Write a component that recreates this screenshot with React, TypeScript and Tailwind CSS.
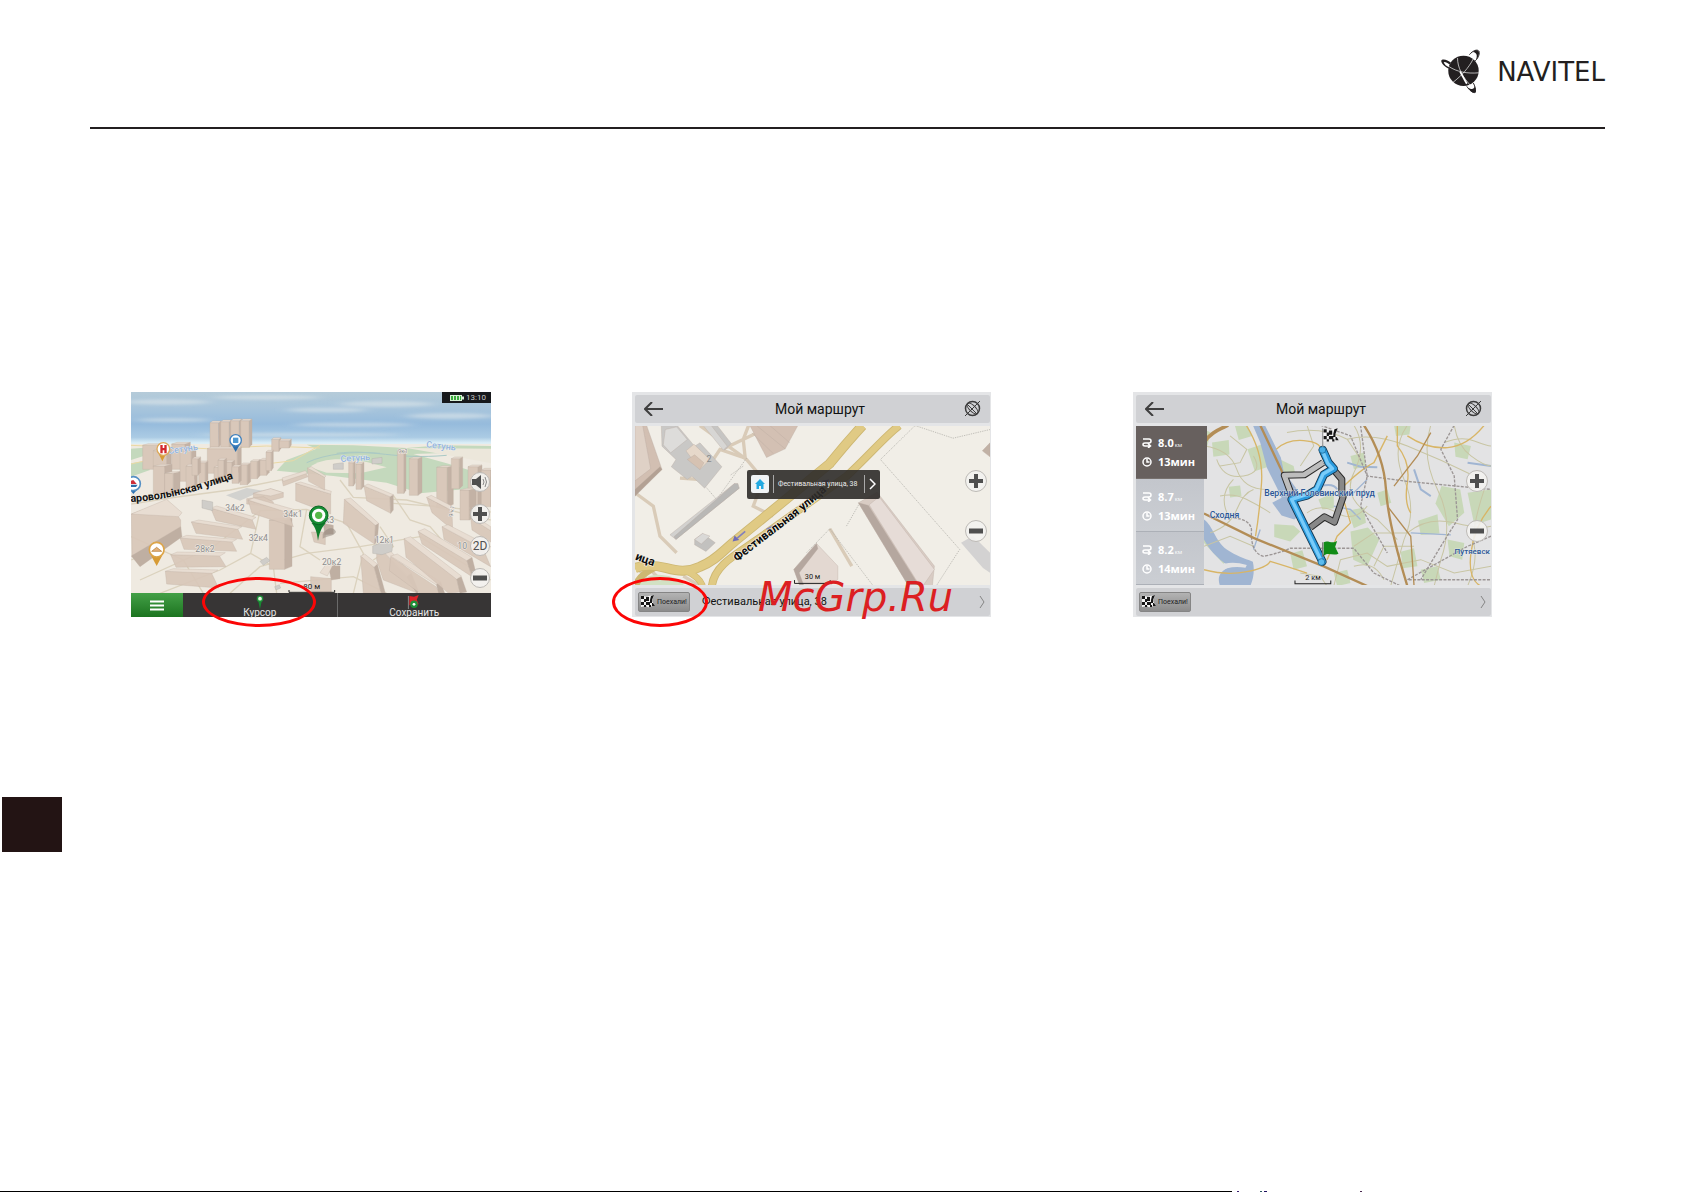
import type { ReactNode } from "react";

type Tower = [x: number, y: number, w: number, h: number, d: number];
type Slab = { face: string; side?: string; roof?: string };

// x, top, face width, height, side width
const towers: Tower[] = [
    [270, 128, 26, 74, 8], [302, 125, 26, 80, 8], [332, 122, 26, 76, 8], [362, 122, 26, 80, 8],
    [455, 178, 22, 36, 6], [478, 182, 30, 22, 6], [68, 196, 50, 72, 16], [100, 212, 40, 50, 14],
    [155, 192, 40, 76, 16], [180, 212, 34, 92, 14], [262, 206, 90, 74, 12], [236, 248, 20, 60, 8],
    [198, 258, 26, 66, 8], [282, 262, 20, 48, 8], [316, 246, 20, 52, 8], [360, 254, 22, 60, 10],
    [392, 244, 20, 52, 8], [420, 240, 20, 46, 8], [438, 216, 16, 56, 6], [336, 260, 20, 50, 8],
    [100, 258, 34, 84, 22], [134, 280, 26, 60, 20], [686, 248, 14, 70, 6], [708, 252, 16, 76, 8],
    [832, 212, 20, 128, 6], [868, 236, 26, 110, 12], [950, 262, 32, 120, 18], [994, 236, 24, 90, 10],
    [1044, 260, 30, 120, 12], [1084, 270, 28, 110, 10], [448, 420, 46, 148, 22], [294, 240, 18, 50, 8],
    [216, 236, 18, 50, 8], [1020, 330, 28, 90, 20],
];

const slabs: Slab[] = [
    { face: "527,310 632,342 632,402 527,362", roof: "527,310 542,306 634,334 632,342" },
    { face: "562,264 614,292 614,330 566,304", roof: "562,264 574,260 618,288 614,292" },
    { face: "673,358 766,436 764,492 670,430", side: "766,436 776,430 772,482 764,492", roof: "673,358 692,354 776,430 766,436" },
    { face: "732,318 810,350 812,400 740,362", side: "810,350 820,344 820,390 812,400", roof: "732,318 744,312 820,344 810,350" },
    { face: "920,352 996,392 998,450 936,398", roof: "920,352 934,346 1006,384 996,392" },
    { face: "486,300 556,278 564,290 490,318", roof: "486,294 556,272 562,280 490,304" },
    { face: "400,340 452,326 490,338 490,352 452,362 400,356", roof: "400,340 452,326 490,338 452,348" },
    { face: "380,356 430,350 460,366 460,380 380,372" },
    { face: "272,384 396,418 408,448 288,422", roof: "272,384 290,378 408,412 396,420" },
    { face: "214,426 352,444 368,478 228,460", roof: "214,426 236,420 366,440 352,448" },
    { face: "180,474 334,482 350,514 192,508", roof: "180,474 200,466 350,478 336,486" },
    { face: "152,524 296,524 318,560 168,562", roof: "152,524 172,516 316,518 300,528" },
    { face: "136,574 272,574 296,624 140,612", roof: "136,574 160,566 294,570 276,580" },
    { face: "384,360 504,396 520,440 396,400", roof: "384,360 402,354 520,388 504,398" },
    { face: "34,402 144,362 182,420 182,452 36,528", side: "34,528 182,440 186,470 60,560", roof: "34,402 140,358 186,398 176,410" },
    { face: "770,494 860,590 894,640 790,600 770,540", side: "860,590 874,580 896,636 890,640", roof: "770,494 786,486 874,580 862,588" },
    { face: "812,530 948,620 960,640 900,640 808,572", side: "948,610 962,606 974,640 956,640", roof: "812,528 832,522 962,606 948,614" },
    { face: "852,476 1010,596 1020,636 986,640 858,532", side: "1010,596 1024,590 1040,636 1020,640", roof: "852,476 872,470 1024,588 1010,598" },
    { face: "894,454 1040,540 1056,590 906,492", side: "1040,540 1056,532 1068,580 1056,590", roof: "894,454 914,446 1056,532 1040,542" },
    { face: "966,440 1090,508 1112,560 972,478", roof: "966,440 984,434 1112,500 1096,510" },
    { face: "1052,414 1112,452 1112,486 1056,450", roof: "1052,414 1066,410 1112,440 1112,452" },
    { face: "722,528 762,560 784,640 730,640", side: "762,560 772,552 796,640 784,640", roof: "722,528 734,522 772,552 762,562" },
    { face: "574,456 616,456 616,494 582,486", side: "610,430 640,436 640,462 614,464" },
    { face: "572,590 634,596 634,636 572,636", side: "624,552 660,556 660,596 634,600", roof: "600,578 622,548 640,552 622,588" },
];

const cityRoads = [
    "M34 372 L150 354 L330 330 L520 292", "M180 470 L34 540", "M60 600 L280 500 L420 392 L560 388 L680 430 L730 520 L700 640",
    "M330 640 L420 560 L560 520 L720 500 L900 470 L1112 600", "M420 392 L392 520 L460 560 L470 640", "M560 388 L540 500 L600 540",
    "M820 346 L870 420 L930 440 L1000 520", "M34 470 L190 540 L250 640", "M660 300 L700 352 L860 360 L1112 420",
    "M480 610 L700 590 L800 640", "M820 370 L960 380 L1112 396", "M392 520 L300 570 L120 640", "M780 440 L820 500 L760 540",
];

function CityScene() {
    return (
        <svg viewBox="33 36 1080 675" preserveAspectRatio="xMidYMid slice" className="absolute inset-0 h-full w-full">
            <defs>
                <linearGradient id="sky" x1="0" y1="0" x2="0" y2="1">
                    <stop offset="0" stopColor="#b5cbd9" />
                    <stop offset="0.3" stopColor="#a8c5dc" />
                    <stop offset="0.6" stopColor="#96bbdc" />
                    <stop offset="0.85" stopColor="#abcbe4" />
                    <stop offset="0.95" stopColor="#d9edf6" />
                    <stop offset="1" stopColor="#e6f1f0" />
                </linearGradient>
                <filter id="cloud" x="-20%" y="-100%" width="140%" height="300%">
                    <feGaussianBlur stdDeviation="20 5" />
                </filter>
                <path id="street" d="M32 366 C110 362 170 348 214 336 S310 306 350 292" />
            </defs>
            <rect x="33" y="36" width="1080" height="160" fill="url(#sky)" />
            <g fill="#dde6ea" filter="url(#cloud)" opacity="0.6">
                <ellipse cx="140" cy="66" rx="130" ry="8" />
                <ellipse cx="440" cy="52" rx="160" ry="7" />
                <ellipse cx="620" cy="90" rx="120" ry="7" />
                <ellipse cx="800" cy="72" rx="140" ry="9" />
                <ellipse cx="990" cy="108" rx="130" ry="9" />
                <ellipse cx="160" cy="120" rx="110" ry="6" />
                <ellipse cx="700" cy="134" rx="180" ry="6" />
                <ellipse cx="540" cy="164" rx="300" ry="5" />
            </g>
            <rect x="33" y="192" width="1080" height="519" fill="#efeae1" />
            <g fill="#c4d9bd">
                <path d="M33 206 L110 200 L160 206 L90 222 L33 240 Z" />
                <path d="M500 240 L590 206 L560 194 L700 196 L860 204 L960 196 L1113 198 L1113 232 L1000 218 L880 222 L980 250 L1113 290 L1113 320 L900 340 L800 308 L640 288 L470 272 Z" />
                <path d="M33 250 L70 244 L90 270 L33 290 Z" />
            </g>
            <g fill="#ece7db">
                <path d="M570 262 C600 236 660 232 740 246 L800 262 L720 280 L620 278 Z" />
                <path d="M860 204 L1113 206 L1113 250 L1010 230 Z" />
            </g>
            <path d="M650 220 C760 206 820 240 980 226 M560 248 C620 220 700 214 780 220" fill="none" stroke="#aac9c5" strokeWidth="3" />
            <path d="M33 252 L140 228 M420 254 L520 242 L600 196 M33 196 L260 206 L440 198 L600 204" fill="none" stroke="#ead9a4" strokeWidth="3" />
            <g fill="none" stroke="#dbd2be" strokeWidth="4">
                {cityRoads.map((d) => <path key={d} d={d} />)}
            </g>
            <path d="M318 346 L380 324 L428 332 L360 362 Z" fill="#d2d2cf" />
            <g stroke="#bfb0a4" strokeWidth="1" strokeLinejoin="round">
                {towers.map(([x, y, w, h, d]) => (
                    <g key={`${x}-${y}`}>
                        <rect x={x} y={y} width={w} height={h} fill="#d9c8ba" />
                        <path d={`M${x + w} ${y} l${d} -5 v${h - 4} l${-d} 9 Z`} fill="#c3b2a5" />
                        <path d={`M${x} ${y} l${d} -5 h${w} l${-d} 5 Z`} fill="#e6dacf" />
                    </g>
                ))}
                {slabs.map(({ face, side, roof }) => (
                    <g key={face}>
                        <polygon points={face} fill="#d8c7b9" fillOpacity="0.92" />
                        {side && <polygon points={side} fill="#bfafa2" />}
                        {roof && <polygon points={roof} fill="#e8ddd2" />}
                    </g>
                ))}
                <g fill="#cfcdc9" stroke="#a9a6a2">
                    <path d="M758 498 L790 486 L818 490 L816 514 L786 524 L758 520 Z" />
                    <path d="M246 360 L278 366 L278 392 L246 384 Z" />
                    <path d="M420 544 L440 532 L450 542 L430 556 Z" />
                    <path d="M464 620 L478 614 L482 624 L468 630 Z" />
                    <path d="M640 252 L670 248 L670 268 L640 268 Z M756 236 L786 232 L786 250 L756 252 Z" />
                </g>
            </g>
            <path d="M608 462 C620 440 644 440 648 456 C640 470 620 468 608 476 Z" fill="#8d8178" opacity="0.5" />
            <g fontFamily="Roboto, sans-serif" fontSize="26" fill="#8c8c8c" stroke="#f4f0ea" strokeWidth="3" paintOrder="stroke">
                <text x="316" y="394">34к2</text>
                <text x="490" y="410">34к1</text>
                <text x="386" y="482">32к4</text>
                <text x="226" y="516">28к2</text>
                <text x="614" y="428">к3</text>
                <text x="764" y="490">12к1</text>
                <text x="606" y="554">20к2</text>
                <text x="1012" y="508">10</text>
                <text x="834" y="218" fontSize="18">9к1</text>
                <text fontSize="18" transform="translate(998 412) rotate(-80)">9 к1</text>
            </g>
            <g fontFamily="Roboto, sans-serif" fontSize="27" fontWeight="500" fill="#94b4de" stroke="#eef3f4" strokeWidth="2" paintOrder="stroke">
                <text transform="translate(662 246) rotate(-4)">Сетунь</text>
                <text transform="translate(918 202) rotate(6)">Сетунь</text>
                <text transform="translate(146 222) rotate(-8)">Сетунь</text>
            </g>
            <text fontFamily="Roboto, sans-serif" fontSize="32" fontWeight="700" fill="#111">
                <textPath href="#street">аровольінская улица</textPath>
            </text>
            {/* points of interest */}
            <g>
                <path d="M127 244 L116 222 h22 Z" fill="#d79b35" />
                <circle cx="130" cy="207" r="19" fill="#fff" stroke="#dda95a" strokeWidth="4" />
                <path d="M121 195 h7 v9 h5 v-9 h7 v25 h-7 v-9 h-5 v9 h-7 Z" fill="#d32a2d" />
                <path d="M347 216 L335 194 h24 Z" fill="#2c6fae" />
                <circle cx="347" cy="181" r="17" fill="#fff" stroke="#3f80bd" strokeWidth="4" />
                <rect x="339" y="173" width="16" height="16" fill="#4c98d2" />
                <path d="M40 342 L26 324 h30 Z" fill="#2c6fae" />
                <circle cx="40" cy="311" r="21" fill="#fff" stroke="#5590c4" strokeWidth="5" />
                <path d="M33 302 L40 300 L50 312 H33 Z" fill="#cf2f3a" />
                <path d="M33 314 H53 L48 321 H33 Z" fill="#2f6ea9" />
                <path d="M110 558 L94 528 h32 Z" fill="#d79b35" />
                <circle cx="110" cy="509" r="22" fill="#fff" stroke="#dda548" strokeWidth="5" />
                <path d="M95 514 L110 502 L125 514 Z" fill="#e3b17a" stroke="#b1772e" strokeWidth="2" />
            </g>
            <path d="M594 482 C590 446 582 438 574 428 H618 C608 440 600 448 594 482 Z" fill="#0f7d2c" />
            <circle cx="596" cy="406" r="28" fill="#178f34" stroke="#0a6424" strokeWidth="3" />
            <circle cx="596" cy="406" r="20" fill="#fff" />
            <circle cx="596" cy="406" r="11" fill="#55b848" />
            <path d="M507 630 v7 h137 v-7" fill="none" stroke="#222" strokeWidth="3" />
            <text x="550" y="628" fontFamily="Roboto, sans-serif" fontSize="24" fill="#222">80 м</text>
        </svg>
    );
}

function StreetMap() {
    return (
        <svg viewBox="105 138 1066 481" preserveAspectRatio="xMidYMid slice" className="absolute inset-0 h-full w-full">
            <defs>
                <path id="avenue" d="M412 548 C470 500 540 450 600 402 S670 344 730 290" />
            </defs>
            <rect x="105" y="138" width="1066" height="481" fill="#f1eee7" />
            <g fill="none" stroke="#d9cbb8" strokeWidth="10">
                <path d="M300 138 L440 240 L490 300 L460 380 L520 410" />
                <path d="M446 138 L430 180 L436 236 L360 210 L300 300 L240 296 M366 210 L480 156" />
                <path d="M105 340 L160 380 L180 470 L230 520" />
                <path d="M690 448 L756 560" />
                <path d="M140 560 L190 610 M250 590 L300 619 M105 556 L150 610" />
            </g>
            <g fill="none" stroke="#a9a7a2" strokeWidth="2" strokeDasharray="4 3">
                <path d="M440 236 L350 360 L240 232 M430 260 L390 288" />
                <path d="M946 138 L842 240 L1080 510 L1010 619" />
                <path d="M946 138 L1060 176 L1171 150" />
                <path d="M690 448 L620 520 M690 448 L820 619 M740 440 L780 370" />
            </g>
            <g stroke="#b5a89d" strokeWidth="1">
                <path d="M105 138 H140 L186 270 L105 340 Z" fill="#d2bfb2" />
                <path d="M105 138 H128 L152 268 L105 304 Z" fill="#dfd1c6" />
                <path d="M186 270 L105 350 V330 L180 262 Z" fill="#b3a194" />
                <path d="M184 138 H232 L284 200 L300 190 L366 262 L314 326 L276 290 L262 300 L214 262 L228 240 L186 200 Z" fill="#c9c8c6" />
                <path d="M196 150 L230 142 L262 180 L212 220 L190 196 Z" fill="#dddcda" />
                <path d="M258 214 L282 194 L330 240 L300 270 Z" fill="#e6d8ca" />
                <path d="M284 226 L312 250 L300 270 L262 240 Z" fill="#d6c2b2" />
                <path d="M318 138 H352 L394 192 L374 212 Z" fill="#c6c5c3" />
                <path d="M310 138 H334 L382 200 L370 212 Z" fill="#d7d6d4" />
                <path d="M450 138 H594 L556 208 L500 234 Z" fill="#d3c0b3" />
                <path d="M470 138 L556 208 M510 138 L570 190 M456 160 L520 222" fill="none" />
                <path d="M404 312 L418 326 L228 480 L210 466 Z" fill="#d2d1cf" />
                <path d="M404 312 L414 312 L418 326 L228 480 L222 472 Z" fill="#b9b8b6" />
                <path d="M284 480 L308 462 L346 490 L318 516 L284 496 Z" fill="#c2c1bf" />
                <path d="M284 480 L308 462 L330 470 L304 494 Z" fill="#dad9d7" />
                <path d="M776 370 L832 338 L1004 560 L998 619 L926 619 Z" fill="#d9ccc4" />
                <path d="M808 376 L838 352 L1004 570 L970 619 H960 Z" fill="#e6dcd7" />
                <path d="M776 370 L806 378 L958 619 H926 Z" fill="#b5a79f" />
                <path d="M582 570 L650 492 L714 560 V600 L690 619 H600 Z" fill="#e3d8d1" />
                <path d="M582 570 L650 492 L654 508 L598 580 L612 619 H600 Z" fill="#b5a79f" />
                <path d="M1084 490 L1120 470 L1171 520 V580 L1150 566 Z" fill="#d3d2d2" stroke="none" />
                <path d="M1171 190 L1148 214 L1171 232 Z" fill="#c1b1a5" />
            </g>
            <path d="M118 619 C126 592 158 582 196 588 C226 592 250 606 252 619 Z" fill="#d2e1c3" />
            <g fill="none" stroke="#cdb772" strokeWidth="30">
                <path d="M788 138 C740 190 716 220 690 252 L404 486 C370 512 350 542 300 562 C262 580 230 574 200 566 C160 556 130 556 105 566" />
                <path d="M898 138 C850 176 800 236 740 290 L470 482 C400 530 344 560 336 619" strokeWidth="24" />
                <path d="M256 572 C288 590 300 600 308 619" strokeWidth="20" />
                <path d="M170 562 C130 580 112 600 108 619" strokeWidth="20" />
            </g>
            <g fill="none" stroke="#e0ca84" strokeWidth="25">
                <path d="M788 138 C740 190 716 220 690 252 L404 486 C370 512 350 542 300 562 C262 580 230 574 200 566 C160 556 130 556 105 566" />
                <path d="M898 138 C850 176 800 236 740 290 L470 482 C400 530 344 560 336 619" strokeWidth="19" />
                <path d="M256 572 C288 590 300 600 308 619" strokeWidth="16" />
            </g>
            <path d="M436 456 L412 476 M500 450 L520 440" stroke="#8380bb" strokeWidth="5" />
            <path d="M398 486 L404 468 L418 482 Z M688 300 L666 304 L680 318 Z" fill="#6f6cb8" />
            <text x="320" y="248" fontFamily="Roboto, sans-serif" fontSize="27" fill="#8a8a8a">2</text>
            <g fontFamily="Roboto, sans-serif" fontSize="35" fontWeight="700" fill="#0c0c0c" stroke="#f4efe4" strokeWidth="4" paintOrder="stroke">
                <text><textPath href="#avenue">Фестивальная улица</textPath></text>
                <text transform="translate(104 540) rotate(20)">ица</text>
            </g>
            <path d="M584 602 v10 h107 v-10" fill="none" stroke="#222" strokeWidth="3" />
            <text x="615" y="600" fontFamily="Roboto, sans-serif" fontSize="22" fill="#222">30 м</text>
        </svg>
    );
}

const minorRoads = [
    "M252 200 Q330 210 350 270 T440 330", "M270 460 Q330 440 350 390 T400 330", "M290 240 Q310 300 370 290 T400 230",
    "M330 170 L380 210 L360 250 L300 260", "M560 138 L580 200 L540 260", "M700 138 Q740 200 700 280 T770 420 L830 480",
    "M860 138 Q810 210 850 300 T850 480 L810 619", "M930 138 Q900 230 950 330 T960 540 L940 619",
    "M700 500 L760 460 L860 460 Q920 410 1000 430 T1110 440", "M640 619 L660 540 L740 520 L800 560 L900 540 L1000 580 L1110 560",
    "M560 400 Q600 370 650 400 T740 380", "M252 500 L330 470 L400 500", "M1000 138 Q1010 200 1050 230 T1110 260",
    "M970 190 Q1020 170 1060 185 T1110 200", "M680 180 Q760 160 860 200 T1060 290", "M300 350 Q340 340 380 360 T450 400",
    "M760 560 L790 500 L880 500", "M1040 619 Q1070 550 1060 500 T1090 330", "M500 160 Q600 140 680 180 L720 240",
    "M700 560 Q760 540 790 600", "M340 300 Q290 350 330 420", "M540 580 L600 590 L620 619",
];

function RouteMap() {
    return (
        <svg viewBox="252 138 858 481" preserveAspectRatio="xMidYMid slice" className="absolute inset-0 h-full w-full">
            <rect x="252" y="138" width="858" height="481" fill="#e3e3e4" />
            <g fill="#c8d8b8">
                <path d="M276 190 L326 182 L328 226 L280 232 Z" />
                <path d="M344 138 H382 L396 170 L356 182 Z" />
                <path d="M382 210 L424 196 L444 262 L404 276 Z" />
                <path d="M478 240 L520 260 L524 280 L484 288 Z" />
                <path d="M462 434 L520 438 L540 456 L510 486 L462 472 Z" />
                <path d="M682 394 L730 384 L736 430 L700 446 Z" />
                <path d="M690 456 L742 444 L776 480 L740 560 L698 540 Z" />
                <path d="M892 424 L950 404 L956 462 L900 466 Z" />
                <path d="M962 320 L1018 330 L1030 400 L984 440 L944 372 Z" />
                <path d="M1040 340 L1110 330 V420 L1060 436 Z" />
                <path d="M594 360 L640 340 L640 386 L606 390 Z" />
                <path d="M690 230 L730 220 L736 260 L700 270 Z" />
                <path d="M840 516 L880 506 L890 560 L846 566 Z" />
                <path d="M510 522 L546 512 L560 560 L520 570 Z" />
                <path d="M820 138 H870 L866 166 L826 170 Z M1000 190 L1050 200 L1040 240 L1004 232 Z" />
                <path d="M980 480 L1030 490 L1024 540 L986 530 Z M252 150 L272 160 L262 200 L252 200 Z" />
                <path d="M640 580 L680 570 L690 610 L650 619 Z M900 570 L950 560 L960 600 L910 610 Z" />
                <path d="M770 340 L800 330 L812 370 L780 380 Z M326 322 L360 318 L364 350 L330 354 Z" />
                <path d="M252 450 L280 470 L300 520 L330 540 L310 552 L252 490 Z" />
            </g>
            <g fill="#a0b5d2">
                <path d="M398 138 H434 L482 235 L490 275 L530 330 L540 405 L522 420 L484 408 L456 370 L484 355 L470 325 L440 265 L420 190 Z" />
                <path d="M252 420 C280 440 282 480 320 510 C350 530 370 536 398 546 C404 570 400 600 390 619 H300 C290 590 300 576 330 560 C290 540 262 500 252 480 Z" />
            </g>
            <path d="M290 560 Q330 540 380 556 L376 564 Q330 556 296 576 Z" fill="#e3e3e4" />
            <g fill="none" stroke="#a0b5d2" strokeWidth="6">
                <path d="M680 250 L720 262 L770 264 M880 270 L900 330 L930 350 M1110 260 L1040 250 M600 320 Q640 310 650 330" />
                <path d="M870 460 L990 466 M700 340 L740 300 M640 380 L690 390 L720 420 M400 510 L420 450" strokeWidth="4" />
            </g>
            <g fill="none" stroke="#c8c5a3" strokeWidth="3">
                {minorRoads.map((d) => <path key={d} d={d} />)}
            </g>
            <g fill="none" stroke="#d8b566" strokeWidth="4">
                <path d="M252 570 Q320 588 380 576 T450 545 Q500 560 560 580" />
                <path d="M378 138 Q430 220 424 310 T406 470" />
                <path d="M468 210 Q500 180 550 184 T600 210 M620 540 L650 470 L690 430 L660 330 Q720 270 760 250 L800 170" />
                <path d="M830 138 L830 200 Q870 250 860 310 T870 400 M1110 380 Q1060 440 1050 520 T1080 619" />
                <path d="M860 170 Q920 210 980 205 T1090 138" />
            </g>
            <g fill="none" stroke="#9c9695" strokeWidth="4" strokeDasharray="9 4">
                <path d="M600 138 L690 170 L740 290 L860 306 L1110 330" />
                <path d="M340 415 Q390 420 394 450 Q390 520 430 530 Q480 520 510 506 H700 L760 580 L840 619" />
                <path d="M1000 138 L960 210 L1000 290 L1010 420 L960 500 L900 600" />
                <path d="M720 138 L740 290 L720 380 L800 520 M1110 470 L1040 500 L860 600 L1110 600" />
            </g>
            <g fill="none" stroke="#b38d56" strokeWidth="7">
                <path d="M420 138 L480 265 L520 360" />
                <path d="M252 402 L400 475 L610 560 L740 619" />
                <path d="M730 138 Q790 230 796 330 T860 619" />
                <path d="M252 190 C270 160 300 150 324 138" strokeWidth="11" />
                <path d="M800 380 L870 470 L880 619 M930 160 L890 230 L820 320" strokeWidth="4" />
            </g>
            <g fill="none" strokeLinejoin="round">
                <path d="M608 250 L552 286 L492 288 L518 358" stroke="#2a2a2a" strokeWidth="21" />
                <path d="M608 250 L552 286 L492 288 L518 358" stroke="#bdbdbd" strokeWidth="15" />
                <path d="M642 274 L664 300 L664 346 L668 352 L642 428 L612 412 L570 444" stroke="#2a2a2a" strokeWidth="21" />
                <path d="M642 274 L664 300 L664 346 L668 352 L642 428 L612 412 L570 444" stroke="#888" strokeWidth="15" />
                <path d="M607 212 L624 250 L640 268 L610 286 L590 330 L560 348 L514 360 L606 546" stroke="#12324a" strokeWidth="25" strokeLinecap="round" />
                <path d="M607 212 L624 250 L640 268 L610 286 L590 330 L560 348 L514 360 L606 546" stroke="#2a99dc" strokeWidth="20" strokeLinecap="round" />
                <path d="M605 212 L622 252 L636 268 L608 284 L588 328 L558 346 L514 360 L604 546" stroke="#79ccfa" strokeWidth="10" strokeLinecap="round" />
            </g>
            <g fontFamily="Roboto, sans-serif" fontSize="26" fontWeight="500" fill="#2b5695" stroke="#e9ecef" strokeWidth="2" paintOrder="stroke">
                <text x="432" y="350">Верхний Головинский пруд</text>
                <text x="269" y="415">Сходня</text>
                <text x="1001" y="524" fontSize="24">Путяевск</text>
            </g>
            <circle cx="606" cy="212" r="10" fill="#4aaee6" stroke="#12608f" strokeWidth="2" />
            <circle cx="603" cy="547" r="10" fill="#5bbcf0" stroke="#12608f" strokeWidth="2" />
            <path d="M607 148 v56" stroke="#888" strokeWidth="3" />
            <svg x="609" y="146" width="46" height="48" viewBox="0 0 14 14"><Checkers /></svg>
            <path d="M607 488 v44" stroke="#777" strokeWidth="4" />
            <path d="M610 488 C622 480 634 494 650 484 L644 502 L654 522 C636 530 624 516 610 528 Z" fill="#118c17" />
            <path d="M524 602 v10 h107 v-10" fill="none" stroke="#222" strokeWidth="3" />
            <text x="555" y="600" fontFamily="Roboto, sans-serif" fontSize="22" fill="#222">2 км</text>
        </svg>
    );
}

function Checkers() {
    return (
        <g>
            <path d="M0 1 C3 0 5 3 8 1 L13 0 L11 6 L14 11 C11 10 8 14 5 11 L0 12 Z" fill="#f5f5f5" />
            <path d="M0 1h3v3h-3zM5 2h3v4h-3zM10 1l3 -1l-2 5h-2zM3 4h2v3h-2zM0 7h3v3h-3zM5 7h4v3h-4zM9 5h2v3h-2zM11 8h1l2 3h-3zM3 10h2v2h-2zM8 10h2v2h-2z" fill="#161616" />
        </g>
    );
}

function NavitelLogo() {
    return (
        <div className="flex w-[164px] items-center justify-between">
            <svg viewBox="62 56 118 134" className="h-[45px] w-[39px]" aria-hidden="true">
                <circle cx="130" cy="121" r="46" fill="#231f20" />
                <g fill="none" stroke="#fff" strokeWidth="2">
                    <path d="M86 108 C110 124 140 130 176 127" />
                    <path d="M112 82 C112 110 126 140 156 170" />
                    <path d="M98 156 C124 136 146 112 160 84" />
                    <path d="M120 124 L140 160" strokeWidth="5" />
                </g>
                <path d="M64 88 C72 84 84 90 92 96 L88 102 C80 96 72 92 70 96 L76 104 L88 112 L84 114 C66 104 60 92 64 88 Z" fill="#231f20" />
                <path d="M148 72 C158 60 172 54 177 62 C180 72 172 86 164 92" fill="none" stroke="#231f20" strokeWidth="3" />
                <path d="M158 64 C168 56 178 58 177 68 C176 76 172 84 168 88 C172 76 172 66 158 64 Z" fill="#231f20" />
                <path d="M140 168 C148 180 160 190 166 186 C168 176 164 166 160 158" fill="none" stroke="#231f20" strokeWidth="3" />
                <path d="M144 172 C150 184 162 190 166 186 C168 180 166 172 164 168 C162 178 154 178 144 172 Z" fill="#231f20" />
            </svg>
            <span className="font-['DejaVu_Sans',sans-serif] text-[26px] leading-6">NAVITEL</span>
        </div>
    );
}

function RoundButton({ label, small, children }: { label: string; small?: boolean; children: ReactNode }) {
    return (
        <button
            type="button"
            aria-label={label}
            className={`flex items-center justify-center rounded-full border border-[#bdbab6] bg-[#f3f2f0]/90 text-[#4f4f4f] ${small ? "size-5" : "size-[22px]"}`}
        >
            {children}
        </button>
    );
}

function PlusIcon() {
    return <svg viewBox="0 0 14 14" className="size-[14px]"><path d="M7 0v14M0 7h14" stroke="currentColor" strokeWidth="4" /></svg>;
}

function MinusIcon() {
    return <svg viewBox="0 0 14 14" className="size-[14px]"><path d="M0 7h14" stroke="currentColor" strokeWidth="5" /></svg>;
}

function RedRing({ className }: { className: string }) {
    return <div className={`pointer-events-none absolute rounded-[50%] border-3 border-[#fb0606] ${className}`} />;
}

function CursorScreen() {
    return (
        <section className="relative flex h-[225px] w-[360px] flex-col justify-between">
            <CityScene />
            <div className="relative flex h-[11px] w-[49px] items-center justify-between self-end bg-[#17191c] pr-[5px] pl-2 text-[8px] leading-[11px] text-[#c8c8c8]">
                <svg viewBox="0 0 14 6" className="h-[6px] w-[14px]" aria-hidden="true">
                    <path d="M0 0h12v1.500h2v3h-2v1.500h-12z" fill="#d8f0d6" />
                    <path d="M1 1h2v4h-2zM4 1h2v4h-2zM7 1h2v4h-2zM10 1h1v4h-1z" fill="#3bab3d" />
                </svg>
                <span>13:10</span>
            </div>
            <div className="absolute top-20 right-px flex flex-col gap-3">
                <RoundButton label="Звук" small>
                    <svg viewBox="0 0 16 16" className="size-4">
                        <path d="M0 5h4l5 -4v14l-5 -4h-4z" fill="currentColor" />
                        <path d="M11 5q2 3 0 6M13 3q3 5 0 10" fill="none" stroke="#8a8a8a" />
                    </svg>
                </RoundButton>
                <RoundButton label="Приблизить" small><PlusIcon /></RoundButton>
                <RoundButton label="Режим 2D" small><span className="text-xs leading-4">2D</span></RoundButton>
                <RoundButton label="Отдалить" small><MinusIcon /></RoundButton>
            </div>
            <nav className="relative flex h-6 text-[10px] leading-[8px] text-[#e6e6e6]">
                <button type="button" aria-label="Меню" className="flex w-[52px] items-center justify-center bg-linear-to-b from-[#43a047] to-[#1b741f]">
                    <svg viewBox="0 0 14 11" className="h-[11px] w-[14px]"><path d="M0 1.500h14M0 5.500h14M0 9.500h14" stroke="#fff" strokeWidth="2" /></svg>
                </button>
                <button type="button" className="flex flex-1 flex-col items-center justify-end border-r border-[#6a6a6a] bg-[#2c2b2b]/95">
                    <svg viewBox="0 0 8 15" className="h-[14px] w-2">
                        <path d="M4 15L2 6h4z" fill="#178a32" />
                        <circle cx="4" cy="4" r="3.500" fill="#1d9038" />
                        <circle cx="4" cy="4" r="2" fill="#dff2d9" />
                    </svg>
                    Курсор
                </button>
                <button type="button" className="flex flex-1 flex-col items-center justify-end bg-[#2c2b2b]/95">
                    <svg viewBox="0 0 14 15" className="h-[14px] w-[14px]">
                        <path d="M1 1v14" stroke="#8b8b8b" />
                        <path d="M2 1l5 1l5 -2l-2 5l2 5l-10 1z" fill="#dc2329" />
                        <circle cx="7" cy="10" r="4" fill="#1d9038" />
                        <circle cx="7" cy="10" r="1.500" fill="#fff" />
                    </svg>
                    Сохранить
                </button>
            </nav>
            <RedRing className="top-[185px] left-[71px] h-[50px] w-[114px]" />
        </section>
    );
}

function RouteScreen({ address, children }: { address?: string; children: ReactNode }) {
    return (
        <section className="relative flex h-[225px] w-[359px] flex-col gap-[3px] bg-[#e4e5e7] pt-[3px] pr-px pb-px pl-[3px]">
            <header className="flex h-7 items-center justify-between rounded-xs bg-[#d0d1d4] px-[9px]">
                <button type="button" aria-label="Назад" className="w-8">
                    <svg viewBox="0 0 19 14" className="h-[14px] w-[19px]" fill="none" stroke="#3f3f3f" strokeWidth="2"><path d="M19 7H1M8 0L1 7L8 14" /></svg>
                </button>
                <h2 className="text-sm leading-5 text-[#111]">Мой маршрут</h2>
                <svg viewBox="0 0 17 17" className="size-[17px]" fill="none" stroke="#3c3c3c" aria-label="Нет сигнала">
                    <circle cx="8.500" cy="8.500" r="7" strokeWidth="1.500" />
                    <ellipse cx="8.500" cy="8.500" rx="7" ry="3" transform="rotate(45 8.500 8.500)" />
                    <path d="M3 4L13 14M1 16L16 1" />
                </svg>
            </header>
            <div className="relative flex h-40">
                {children}
                <div className="absolute top-11 right-[3px] flex flex-col gap-7">
                    <RoundButton label="Приблизить"><PlusIcon /></RoundButton>
                    <RoundButton label="Отдалить"><MinusIcon /></RoundButton>
                </div>
            </div>
            <footer className="flex h-7 items-center rounded-xs bg-[#d0d1d4] pr-[5px] pl-[3px]">
                <button type="button" className="flex h-5 w-[52px] shrink-0 items-center gap-[2px] rounded-xs border border-[#858585] bg-linear-to-b from-[#b3b3b3] to-[#8c8c8c] pl-[2px] text-[7px] text-[#222]">
                    <svg viewBox="0 0 14 14" className="size-[14px] shrink-0"><Checkers /></svg>
                    Поехали!
                </button>
                {address && <span className="ml-3 text-[11px] leading-4 text-[#111]">{address}</span>}
                <svg viewBox="0 0 6 14" className="ml-auto h-[14px] w-[6px]" fill="none" stroke="#858585"><path d="M1 1L5 7L1 13" /></svg>
            </footer>
        </section>
    );
}

const routes = [
    { distance: "8.0", time: "13мин", active: true },
    { distance: "8.7", time: "13мин", active: false },
    { distance: "8.2", time: "14мин", active: false },
];

function RouteList() {
    return (
        <ul className="flex w-[68px] shrink-0 flex-col font-['Open_Sans',sans-serif] text-[11px] leading-4 font-bold text-white">
            {routes.map(({ distance, time, active }) => (
                <li key={distance} className="flex-1">
                    <button
                        type="button"
                        className={`relative z-10 flex h-full flex-col justify-center gap-[3px] border-b pt-[2px] pl-[6px] ${active ? "w-[71px] border-[#77716e] bg-[#67605e]" : "w-full border-[#acb0b7] bg-linear-to-b from-[#c3c6cc] to-[#cbced3]"}`}
                    >
                        <span className="flex h-4 items-center gap-[6px]">
                            <svg viewBox="0 0 10 10" className="size-[10px]" fill="none" stroke="currentColor" strokeWidth="1.500">
                                <path d="M1 1h6q2 0 2 2t-2 2h-4q-2 0 -2 1.500t2 1.500h5M6 5.500l2.500 2.500l-2.500 2" />
                            </svg>
                            <span>{distance}<small className="ml-px text-[6px] leading-none font-normal">км</small></span>
                        </span>
                        <span className="flex h-4 items-center gap-[6px]">
                            <svg viewBox="0 0 10 10" className="size-[10px]" fill="none" stroke="currentColor" strokeWidth="1.500">
                                <circle cx="5" cy="5" r="4" />
                                <path d="M5 2v3h2.500" />
                            </svg>
                            {time}
                        </span>
                    </button>
                </li>
            ))}
        </ul>
    );
}

export default function App() {
    return (
        <div className="flex min-h-screen flex-col overflow-hidden bg-white font-[Roboto,sans-serif] text-[#231f20]">
            <header className="mr-[97px] ml-[90px] flex h-[129px] items-start justify-end border-b-2 border-[#231f20] pt-[49px]">
                <NavitelLogo />
            </header>
            <main className="mt-[263px] grid grid-cols-3 pr-[68px] pl-[131px]">
                <CursorScreen />
                <div className="relative">
                    <RouteScreen address="Фестивальная улица, 38">
                        <div className="relative flex-1 overflow-hidden">
                            <StreetMap />
                            <button type="button" className="absolute top-11 left-28 flex h-[29px] w-[133px] items-center gap-1 rounded-xs bg-[#2d2b29]/90 px-1 text-[7px] whitespace-nowrap text-[#ececec]">
                                <span className="flex size-[18px] shrink-0 items-center justify-center rounded-xs bg-[#f0f3f5]">
                                    <svg viewBox="0 0 10 10" className="size-[10px]" fill="#23a9e1"><path d="M5 0L10 5H8.500V10H6V7H4V10H1.500V5H0z" /></svg>
                                </span>
                                <span className="h-[18px] border-l border-[#a9a9a9]" />
                                <span>Фестивальная улица, 38</span>
                                <span className="ml-auto h-[18px] border-l border-[#a9a9a9]" />
                                <svg viewBox="0 0 7 12" className="h-3 w-[7px] shrink-0" fill="none" stroke="#fff" strokeWidth="1.500"><path d="M1 1L6 6L1 11" /></svg>
                            </button>
                        </div>
                    </RouteScreen>
                    <RedRing className="top-[185px] -left-5 h-[50px] w-24" />
                    <span className="absolute top-[181px] left-[126px] font-['DejaVu_Sans',sans-serif] text-[40px] leading-[48px] text-[#dc1f22] italic">McGrp.Ru</span>
                </div>
                <RouteScreen>
                    <RouteList />
                    <div className="relative flex-1 overflow-hidden">
                        <RouteMap />
                    </div>
                </RouteScreen>
            </main>
            <aside className="mt-[180px] ml-[2px] h-[55px] w-[60px] bg-[#231414]" />
            <footer className="mt-auto flex h-px w-full">
                <div className="w-[1232px] bg-black" />
                <div className="ml-[5px] w-[2px] bg-[#3a2070]" />
                <div className="ml-[21px] w-[2px] bg-[#2a5a60]" />
                <div className="ml-[2px] w-[3px] bg-[#201060]" />
                <div className="ml-[93px] w-[2px] bg-[#4a2a50]" />
            </footer>
        </div>
    );
}
